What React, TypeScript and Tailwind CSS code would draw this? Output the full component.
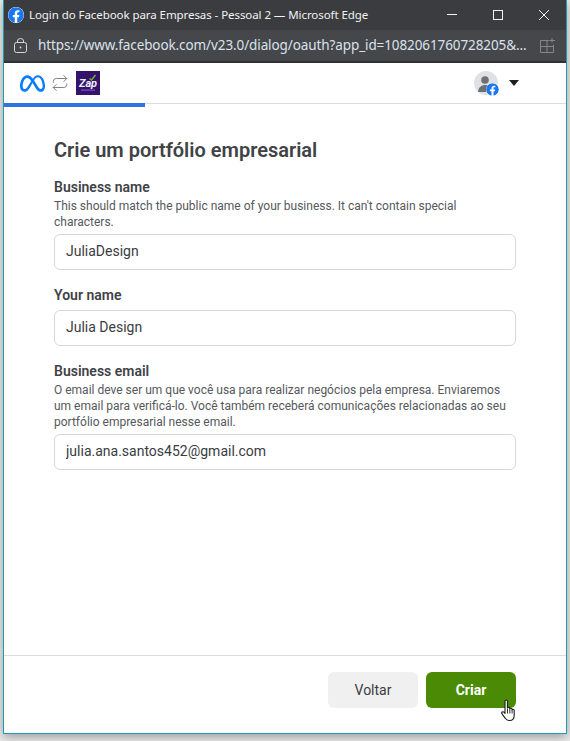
import { Repeat } from "lucide-react";
import { FaFacebook } from "react-icons/fa";
import { SiMeta } from "react-icons/si";

function Field({ label, help, value }: { label: string; help?: string; value: string }) {
  return (
    <div className="mt-4">
      <div className="text-[14px] leading-[18px] font-semibold text-[#404246]">{label}</div>
      {help ? (
        <p className="mt-[2px] mb-1 text-[12px] leading-4 text-[#55585c]">{help}</p>
      ) : (
        <div className="h-[6px]" />
      )}
      <input
        readOnly
        value={value}
        className="block w-full h-9 rounded-md border border-[#d6d8db] bg-white pl-[11px] pr-3 pb-[2px] text-[14px] text-[#3a3c40] outline-none"
      />
    </div>
  );
}

function ZapLogo() {
  return (
    <svg width="24" height="24" viewBox="0 0 24 24" className="shrink-0">
      <rect width="24" height="24" fill="#34146b" />
      <path d="M13.500 7.500l2 1.500 4-5" fill="none" stroke="#69b52c" strokeWidth="1.500" />
      <text x="12" y="16" textAnchor="middle" fontSize="11" fontWeight="700" fontStyle="italic" fill="#f1ecfa" fontFamily="Roboto, sans-serif">
        Zap
      </text>
      <rect x="5" y="18.500" width="14" height="1.200" fill="#7c4fd0" />
    </svg>
  );
}

function HandCursor() {
  return (
    <svg width="18" height="24" viewBox="0 0 17 24" className="absolute left-[500px] top-[699px]">
      <path
        d="M4.500 2.200c0-1.600 2.400-1.600 2.400 0v7c.2-1.200 2.300-1.200 2.400 0v.8c.2-1.100 2.200-1 2.300.2v.7c.3-1 2-.8 2.100.4v4.600c0 3-1.600 5.600-4.600 5.600H8.400c-1.700 0-2.700-.9-3.600-2.200L1.400 14.700c-.8-1.300.9-2.600 2-1.500l1.100 1.200z"
        fill="#fff"
        stroke="#1c1c1c"
        strokeWidth="1.100"
        strokeLinejoin="round"
      />
      <path d="M7 10v4.500M9.300 10.300v4.200M11.600 10.800v3.700" stroke="#1c1c1c" strokeWidth="0.900" />
    </svg>
  );
}

export default function App() {
  return (
    <div className="relative w-[570px] h-[741px] overflow-hidden bg-[#ececec] pl-[3px] font-['Roboto',sans-serif]">
      <div className="flex flex-col w-[564px] h-[734px] border border-t-0 border-[#1d9bb8] bg-white shadow-[0_3px_10px_rgba(0,0,0,0.35)]">
        {/* title bar */}
        <div className="flex items-center h-[30px] shrink-0 bg-[#3b3c3f] pl-[4px] text-white">
          <FaFacebook className="w-4 h-4 shrink-0 text-[#1877f2] bg-white rounded-full" />
          <span className="ml-[5px] text-[11.500px] tracking-[-0.07px] font-['Noto_Sans',sans-serif] text-[#f2f2f2] whitespace-nowrap">
            Login do Facebook para Empresas - Pessoal 2 — Microsoft Edge
          </span>
          <div className="ml-auto flex items-center gap-9 pr-[17px]">
            <svg width="10" height="10" viewBox="0 0 10 10" stroke="#f2f2f2" fill="none">
              <path d="M0 4.500h10" />
            </svg>
            <svg width="10" height="10" viewBox="0 0 10 10" stroke="#f2f2f2" fill="none">
              <rect x="0.500" y="0.500" width="9" height="9" />
            </svg>
            <svg width="10" height="10" viewBox="0 0 10 10" stroke="#f2f2f2" fill="none">
              <path d="M0 0l10 10M10 0L0 10" />
            </svg>
          </div>
        </div>
        {/* address bar */}
        <div className="flex items-center h-[33px] shrink-0 bg-[#46474b] border-b-2 border-[#303134] pl-[10px] pr-[11px]">
          <svg width="13" height="15" viewBox="0 0 13 15" fill="none" stroke="#d8d8d8" strokeWidth="1" className="shrink-0">
            <rect x="0.500" y="4.500" width="12" height="10" rx="2" />
            <path d="M3.500 4.500V3a3 2.500 0 0 1 6 0v1.500" />
            <circle cx="6.500" cy="9.500" r="0.900" fill="#d8d8d8" stroke="none" />
          </svg>
          <span className="ml-[11px] text-[13.500px] font-['Noto_Sans',sans-serif] tracking-[-0.1px] text-[#d9e2ec] whitespace-nowrap">
            https://www.facebook.com/v23.0/dialog/oauth?app_id=1082061760728205&amp;...
          </span>
          <svg width="15" height="15" viewBox="0 0 15 15" fill="none" stroke="#85868a" strokeWidth="1" className="ml-auto shrink-0">
            <path d="M9 2.500H.5v12h13v-8M7 2.500v12M.5 8.500h13M12 0v4.500M9.500 2.500H15" />
          </svg>
        </div>
        {/* meta header */}
        <div className="flex items-center h-10 shrink-0 bg-white pl-[16px] pr-[47px]">
          <SiMeta className="w-[25px] h-[25px] text-[#0a7cff]" />
          <Repeat className="ml-[6px] w-[18px] h-[18px] text-[#7d7f83]" strokeWidth={1.300} />
          <div className="ml-[7px]">
            <ZapLogo />
          </div>
          <div className="relative ml-auto w-6 h-6 rounded-full bg-[#dfe1e4]">
            <svg viewBox="0 0 24 24" className="w-6 h-6">
              <circle cx="11" cy="9" r="3.800" fill="#6d7074" />
              <path d="M4 21c.5-5 3.500-7 7-7s6.500 2 7 7z" fill="#6d7074" />
            </svg>
            <FaFacebook className="absolute -right-px -bottom-px w-[13px] h-[13px] text-[#1877f2] bg-white rounded-full" />
          </div>
          <div className="ml-[11px] w-0 h-0 border-x-[5.500px] border-x-transparent border-t-[6px] border-t-[#1c1e21]" />
        </div>
        {/* progress */}
        <div className="h-1 shrink-0 border-t border-[#dadde1] bg-white">
          <div className="h-[4px] w-[141px] bg-[#2f74e0] -mt-px" />
        </div>
        {/* form */}
        <div className="flex-1 px-[50px] pt-[31px]">
          <h1 className="text-[20px] leading-6 font-semibold text-[#404246]">Crie um portfólio empresarial</h1>
          <Field
            label="Business name"
            help="This should match the public name of your business. It can't contain special characters."
            value="JuliaDesign"
          />
          <Field label="Your name" value="Julia Design" />
          <Field
            label="Business email"
            help="O email deve ser um que você usa para realizar negócios pela empresa. Enviaremos um email para verificá-lo. Você também receberá comunicações relacionadas ao seu portfólio empresarial nesse email."
            value="julia.ana.santos452@gmail.com"
          />
        </div>
        {/* footer */}
        <div className="flex justify-end gap-2 h-[78px] shrink-0 border-t border-[#dadde1] pt-4 pr-[50px]">
          <button className="w-[90px] h-9 rounded-md bg-[#f0f0f0] text-[14px] text-[#3a3c40]">Voltar</button>
          <button className="w-[90px] h-9 rounded-md bg-[#4a8a04] text-[14px] font-bold text-white">Criar</button>
        </div>
      </div>
      <HandCursor />
    </div>
  );
}
